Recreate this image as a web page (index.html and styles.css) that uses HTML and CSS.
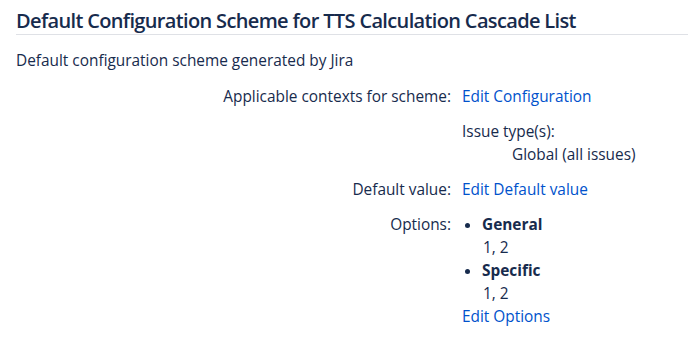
FILE: index.html
```html
<!DOCTYPE html>
<html lang="en">
<head>
    <meta charset="UTF-8">
    <title>Default Configuration Scheme</title>
    <link rel="stylesheet" href="styles.css">
</head>
<body>
    <div class="scheme">
        <h2 class="scheme-title">Default Configuration Scheme for TTS Calculation Cascade List</h2>
        <p class="scheme-desc">Default configuration scheme generated by Jira</p>

        <div class="field-list">
            <div class="field-label">Applicable contexts for scheme:</div>
            <div class="field-value">
                <a href="#">Edit Configuration</a>
                <div class="issue-types">
                    <div>Issue type(s):</div>
                    <div class="issue-type">Global (all issues)</div>
                </div>
            </div>

            <div class="field-label">Default value:</div>
            <div class="field-value">
                <a href="#">Edit Default value</a>
            </div>

            <div class="field-label">Options:</div>
            <div class="field-value">
                <ul class="options">
                    <li>
                        <strong>General</strong>
                        <div class="children">1, 2</div>
                    </li>
                    <li>
                        <strong>Specific</strong>
                        <div class="children">1, 2</div>
                    </li>
                </ul>
                <a href="#">Edit Options</a>
            </div>
        </div>
    </div>
</body>
</html>
```
FILE: styles.css
```css
* {
    margin: 0;
    padding: 0;
    box-sizing: border-box;
}

body {
    background: #fff;
    color: #172b4d;
    font-family: "Open Sans", "Noto Sans", sans-serif;
    font-size: 15.4px;
    line-height: 23px;
}

a {
    color: #0052cc;
    text-decoration: none;
}

.scheme {
    padding-left: 16px;
}

.scheme-title {
    font-size: 20px;
    font-weight: 600;
    letter-spacing: -0.65px;
    line-height: 26px;
    margin-top: 8px;
    border-bottom: 1px solid #dfe1e6;
}

.scheme-desc {
    margin-top: 14px;
}

.field-list {
    display: grid;
    grid-template-columns: 435px 1fr;
    column-gap: 11px;
    row-gap: 12px;
    margin-top: 13px;
}

.field-label {
    text-align: right;
}

.issue-types {
    margin-top: 12px;
}

.issue-type {
    padding-left: 50px;
}

.options {
    padding-left: 20px;
}

.options strong {
    font-weight: 700;
}

.children {
    padding-left: 1px;
}
```
